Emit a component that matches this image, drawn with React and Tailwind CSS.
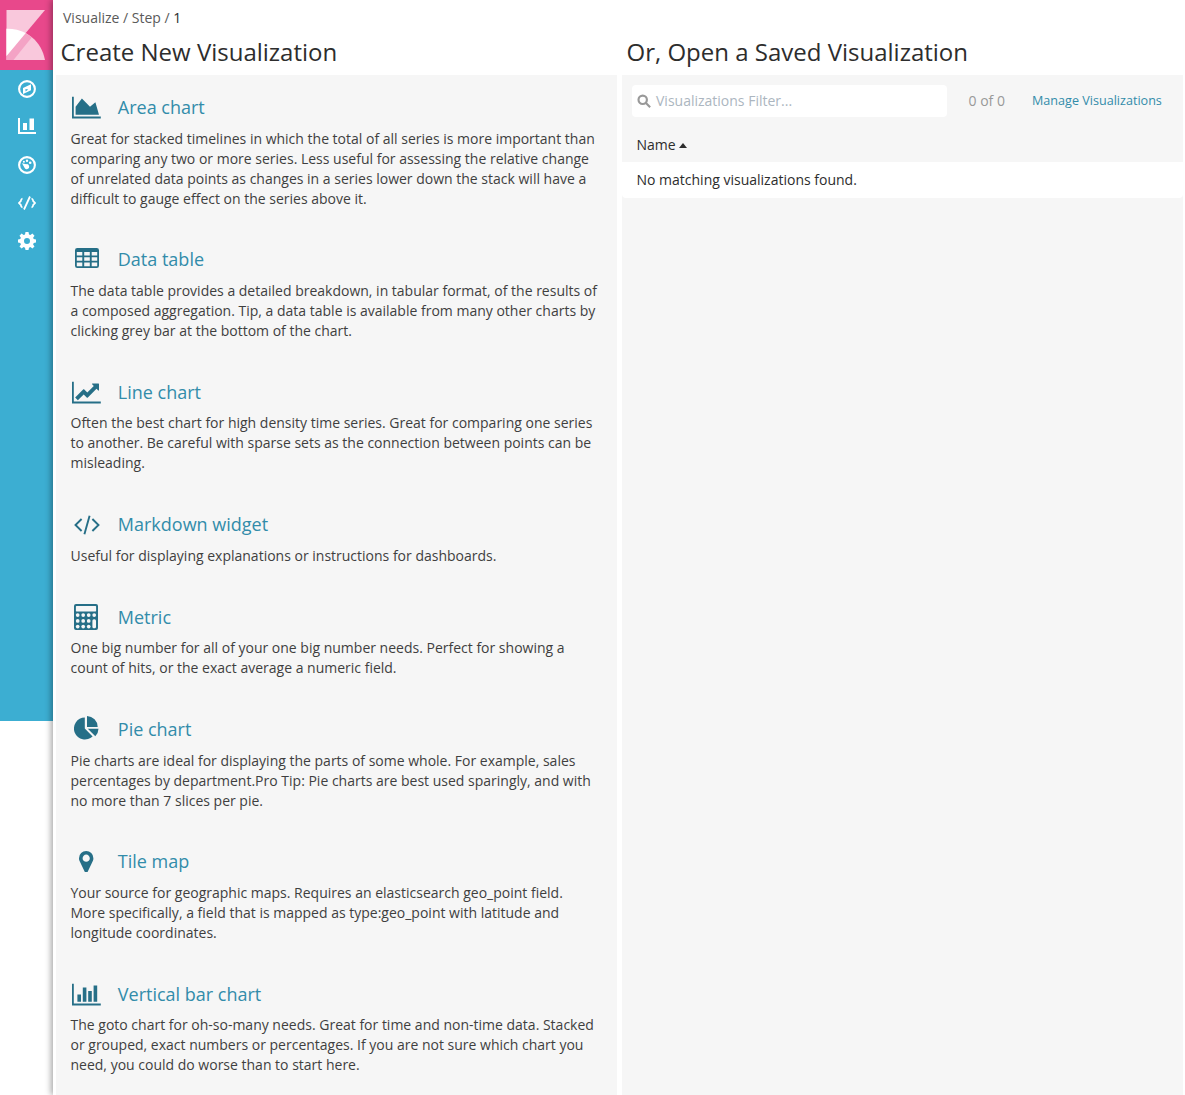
import React from "react";

const Svg = ({ w, h, vb, children, className = "" }) => (
  <svg width={w} height={h} viewBox={vb} fill="currentColor" className={"shrink-0 " + className}>
    {children}
  </svg>
);

const Axis = ({ children }) => (
  <Svg w="28.8" h="25.2" vb="0 0 2048 1792" className="mt-[1px]">
    <path d="M2048 1536v128h-2048v-1536h128v1408h1920z" />
    {children}
  </Svg>
);

const AreaIcon = () => (
  <Axis><path d="M1664 512l256 896h-1664v-576l448-576 576 576z" /></Axis>
);

const LineIcon = () => (
  <Axis>
    <path d="M1920 288v435q0 21-19.5 29.5t-35.5-7.5l-121-121-633 633q-10 10-23 10t-23-10l-233-233-416 416-192-192 585-585q10-10 23-10t23 10l233 233 464-464-121-121q-16-16-7.5-35.5t29.5-19.5h435q14 0 23 9t9 23z" />
  </Axis>
);

const BarIcon = () => (
  <Axis>
    <path d="M640 896v512h-256v-512zM1024 384v1024h-256v-1024zM1408 640v768h-256v-768zM1792 256v1152h-256v-1152z" />
  </Axis>
);

const TableIcon = () => (
  <Svg w="24" h="20" vb="0 0 24 20" className="mb-[2px]">
    <path
      fillRule="evenodd"
      d="M2.3 0h19.400a2.300 2.300 0 0 1 2.300 2.300v15.400a2.300 2.300 0 0 1-2.300 2.300h-19.400a2.300 2.300 0 0 1-2.300-2.300v-15.400a2.300 2.300 0 0 1 2.300-2.300zM1.800 3.900v3.500h5.500v-3.500zM9.200 3.900v3.500h5.600v-3.500zM16.700 3.900v3.500h5.500v-3.500zM1.800 9.200v3.500h5.500v-3.500zM9.200 9.200v3.500h5.600v-3.500zM16.700 9.200v3.500h5.500v-3.500zM1.800 14.500v3.200q0 .500.500.500h5v-3.700zM9.200 14.500v3.700h5.600v-3.700zM16.700 14.500v3.700h5q.500 0 .500-.500v-3.200z"
    />
  </Svg>
);

const MarkdownIcon = () => (
  <Svg w="26" h="20" vb="0 0 26 20" className="mt-[1px]">
    <path d="M7.600 4L1.500 10l6.100 6M18.400 4l6.100 6-6.100 6M15.600.800L10.400 19.200" fill="none" stroke="currentColor" strokeWidth="1.900" />
  </Svg>
);

const MetricIcon = () => (
  <Svg w="24" h="26" vb="0 0 24 26" className="mr-[2px]">
    <path
      fillRule="evenodd"
      d="M2 0h20a2 2 0 0 1 2 2v22a2 2 0 0 1-2 2h-20a2 2 0 0 1-2-2v-22a2 2 0 0 1 2-2zM2.500 1.900q-.600 0-.600.600v4.300q0 .600.600.600h19q.600 0 .600-.600v-4.300q0-.600-.600-.600z"
    />
    <g fill="#f6f6f6">
      {[11.1, 16.9, 22.6].map((y) =>
        [3.7, 9.2, 14.7, 20.2].map((x) =>
          x > 20 && y > 12 ? null : <circle key={x + "-" + y} cx={x} cy={y} r="1.850" />
        )
      )}
      <rect x="18.400" y="15.200" width="3.600" height="9.100" rx="1.500" />
    </g>
  </Svg>
);

const PieIcon = () => (
  <Svg w="25" h="24" vb="0 0 25 24" className="mb-[2px] mr-[0.5px]">
    <path d="M10.800 1.500V12.600L18.600 20.400A11 11 0 1 1 10.800 1.500zM13 0A11 11 0 0 1 23.700 10.900H13zM13.800 12.700H24.500A11 11 0 0 1 21.300 20.200z" />
  </Svg>
);

const PinIcon = () => (
  <Svg w="14.400" h="21.600" vb="0 128 1024 1536">
    <path d="M768 640q0-106-75-181t-181-75-181 75-75 181 75 181 181 75 181-75 75-181zM1024 640q0 109-33 179l-364 774q-16 33-47.500 52t-67.500 19-67.500-19-46.500-52l-365-774q-33-70-33-179 0-212 150-362t362-150 362 150 150 362z" />
  </Svg>
);

const types = [
  { name: "Area chart", Icon: AreaIcon, text: ["Great for stacked timelines in which the total of all series is more important than", "comparing any two or more series. Less useful for assessing the relative change", "of unrelated data points as changes in a series lower down the stack will have a", "difficult to gauge effect on the series above it."] },
  { name: "Data table", Icon: TableIcon, text: ["The data table provides a detailed breakdown, in tabular format, of the results of", "a composed aggregation. Tip, a data table is available from many other charts by", "clicking grey bar at the bottom of the chart."] },
  { name: "Line chart", Icon: LineIcon, text: ["Often the best chart for high density time series. Great for comparing one series", "to another. Be careful with sparse sets as the connection between points can be", "misleading."] },
  { name: "Markdown widget", Icon: MarkdownIcon, text: ["Useful for displaying explanations or instructions for dashboards."] },
  { name: "Metric", Icon: MetricIcon, text: ["One big number for all of your one big number needs. Perfect for showing a", "count of hits, or the exact average a numeric field."] },
  { name: "Pie chart", Icon: PieIcon, text: ["Pie charts are ideal for displaying the parts of some whole. For example, sales", "percentages by department.Pro Tip: Pie charts are best used sparingly, and with", "no more than 7 slices per pie."] },
  { name: "Tile map", Icon: PinIcon, text: ["Your source for geographic maps. Requires an elasticsearch geo_point field.", "More specifically, a field that is mapped as type:geo_point with latitude and", "longitude coordinates."] },
  { name: "Vertical bar chart", Icon: BarIcon, text: ["The goto chart for oh-so-many needs. Great for time and non-time data. Stacked", "or grouped, exact numbers or percentages. If you are not sure which chart you", "need, you could do worse than to start here."] },
];

const Logo = () => (
  <svg width="53" height="70" viewBox="0 0 53 70" className="block shrink-0">
    <rect width="53" height="70" fill="#e8488b" />
    <path d="M6.500 10H45L6.500 56z" fill="#f9c8dc" />
    <path d="M6.500 28.700C26 28.200 41.500 41 45 60H6.500z" fill="#f9c8dc" />
    <path d="M25.700 33.100L31.700 37.500 13.500 60H6.500V56z" fill="#f4a3c5" />
    <path d="M6.500 28.700Q17 28.500 25.700 33.100L6.500 56z" fill="#fff" />
  </svg>
);

const NavItem = ({ label, children }) => (
  <a aria-label={label} className="flex h-[38px] items-center justify-center pl-[1px] text-white">
    <svg width="18" height="18" viewBox="0 0 18 18" fill="currentColor">{children}</svg>
  </a>
);

const Sidebar = () => (
  <nav className="h-[721px] w-[53px] shrink-0 bg-[#3caed2]">
    <Logo />
    <NavItem label="Discover">
      <circle cx="9" cy="9" r="7.900" fill="none" stroke="currentColor" strokeWidth="2.100" />
      <path fillRule="evenodd" d="M13 4.200v6L5 13.900V7.900zM7.500 8.900v2.500L10.300 9.600z" />
    </NavItem>
    <NavItem label="Visualize">
      <path d="M0 0h2v14h16v2H0zM5 5h4v7H5zM11.500 0.500h4.500V12h-4.500z" />
    </NavItem>
    <NavItem label="Dashboard">
      <circle cx="9" cy="9" r="7.900" fill="none" stroke="currentColor" strokeWidth="2.100" />
      <path d="M4 7.200l4.200 1a2.500 2.500 0 1 1-1.800 3.400z" />
      <circle cx="5.900" cy="5.800" r="1" />
      <circle cx="9" cy="4.800" r="1.200" />
      <circle cx="12.200" cy="6.800" r="1.300" />
    </NavItem>
    <NavItem label="Console">
      <path d="M4.500 4.500Q3 5 2.800 7L1 9l1.800 2q.200 2 1.700 2.500M13.500 4.500Q15 5 15.200 7L17 9l-1.800 2q-.200 2-1.700 2.500M12 2.500L6 15.500" fill="none" stroke="currentColor" strokeWidth="1.800" />
    </NavItem>
    <NavItem label="Settings">
      <path fillRule="evenodd" d="M7.500 0h3l.500 2.400 1.400.600 2-1.400 2.100 2.100-1.400 2 .600 1.400 2.300.400v3l-2.300.500-.600 1.400 1.400 2-2.100 2.100-2-1.400-1.400.600-.500 2.300h-3l-.500-2.300-1.400-.600-2 1.400-2.100-2.100 1.400-2-.600-1.400L0 10.500v-3l2.300-.400.600-1.400-1.400-2 2.100-2.100 2 1.400 1.400-.600zM9 6a3 3 0 1 0 0 6a3 3 0 0 0 0-6z" />
    </NavItem>
  </nav>
);

export default function App() {
  return (
    <div className="flex h-[1095px] w-[1185px] overflow-hidden bg-white text-[14px] leading-5 text-[#2d2d2d]" style={{ fontFamily: '"Open Sans", sans-serif' }}>
      <Sidebar />
      <main className="relative flex min-w-0 flex-1 flex-col bg-white pl-[3px] shadow-[-2px_0_6px_rgba(0,0,0,0.35)]">
        <div className="flex h-[36px] items-center pl-[7px] text-[#5a5a5a]">
          <span>Visualize / Step / <span className="text-[#2d2d2d]">1</span></span>
        </div>
        <div className="flex min-h-0 flex-1 gap-[5px]">
          <section className="flex w-[561px] flex-col">
            <h1 className="h-[39px] pl-[4.5px] text-[24px] leading-[32px]">Create New Visualization</h1>
            <div className="flex-1 bg-[#f6f6f6] px-[14px]">
              {types.map(({ name, Icon, text }) => (
                <article key={name} className="pb-[18.8px]">
                  <div className="flex h-[53.6px] items-center pt-[10.4px]">
                    <div className="flex w-[33px] justify-center text-[#266f87]"><Icon /></div>
                    <h2 className="pl-[14.8px] text-[18px] text-[#328caa]">{name}</h2>
                  </div>
                  <p className="whitespace-nowrap pl-[0.5px] text-[#3f3f3f]">
                    {text.map((line) => <span key={line} className="block">{line}</span>)}
                  </p>
                </article>
              ))}
            </div>
          </section>
          <section className="flex w-[561px] flex-col">
            <h1 className="h-[39px] pl-[4.5px] text-[24px] leading-[32px]">Or, Open a Saved Visualization</h1>
            <div className="flex-1 bg-[#f6f6f6]">
              <div className="flex items-center pl-[10px] pt-[10px]">
                <div className="flex h-8 w-[315px] items-center gap-[5px] rounded bg-white pl-[5px] text-[#acb6c0]">
                  <Svg w="14" h="14" vb="0 0 13 13" className="text-[#999]">
                    <path d="M9.200 5.400a3.900 3.900 0 1 1-7.800 0a3.900 3.900 0 0 1 7.800 0zM8.300 8.300L12.200 12.200" fill="none" stroke="currentColor" strokeWidth="2" />
                  </Svg>
                  <span>Visualizations Filter...</span>
                </div>
                <span className="ml-[21.5px] w-[63.5px] text-[#999]">0 of 0</span>
                <a className="text-[12.6px] text-[#328caa]">Manage Visualizations</a>
              </div>
              <div className="flex h-[45px] items-center gap-[3.5px] pl-[14.5px] pt-[11px]">
                <span>Name</span>
                <Svg w="8" h="5" vb="0 0 8 5" className="mt-[1px]"><path d="M0 5L4 0l4 5z" /></Svg>
              </div>
              <div className="flex h-[36px] items-center rounded-b bg-white pl-[14.5px]">No matching visualizations found.</div>
            </div>
          </section>
        </div>
      </main>
    </div>
  );
}
